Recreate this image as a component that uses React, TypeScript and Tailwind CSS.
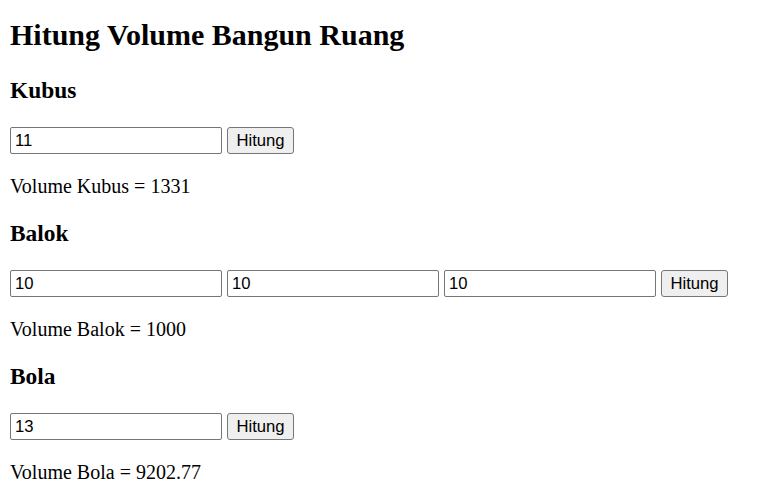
import React, { useState } from "react";

const inputCls =
  "w-[212px] h-[27px] border border-[#767676] rounded-[2px] bg-white pl-[4px] text-[16.67px] text-black font-['Liberation_Sans',Arial,sans-serif] outline-none";
const btnCls =
  "w-[67px] h-[27px] border border-[#767676] rounded-[3px] bg-[#efefef] text-[16.67px] text-black font-['Liberation_Sans',Arial,sans-serif] flex items-center justify-center";

const App = () => {
  const [sisi, setSisi] = useState("11");
  const [p, setP] = useState("10");
  const [l, setL] = useState("10");
  const [t, setT] = useState("10");
  const [r, setR] = useState("13");

  const [kubus, setKubus] = useState("1331");
  const [balok, setBalok] = useState("1000");
  const [bola, setBola] = useState("9202.77");

  return (
    <div className="px-[10px] pt-[18px] text-black font-['Liberation_Serif','Times_New_Roman',serif]">
      <h2 className="text-[30px] leading-[34px] font-bold mb-[25px]">
        Hitung Volume Bangun Ruang
      </h2>

      <h3 className="text-[23.4px] leading-[27px] font-bold mb-[23px]">Kubus</h3>
      <div className="flex items-start gap-[5px] h-[28px]">
        <input className={inputCls} value={sisi} onChange={(e) => setSisi(e.target.value)} />
        <button
          className={btnCls}
          onClick={() => setKubus(String(Number(sisi) ** 3))}
        >
          Hitung
        </button>
      </div>
      <p className="text-[20px] leading-[23px] mt-[20px] mb-[22px]">
        Volume Kubus = {kubus}
      </p>

      <h3 className="text-[23.4px] leading-[27px] font-bold mb-[23px]">Balok</h3>
      <div className="flex items-start gap-[5px] h-[28px]">
        <input className={inputCls} value={p} onChange={(e) => setP(e.target.value)} />
        <input className={inputCls} value={l} onChange={(e) => setL(e.target.value)} />
        <input className={inputCls} value={t} onChange={(e) => setT(e.target.value)} />
        <button
          className={btnCls}
          onClick={() => setBalok(String(Number(p) * Number(l) * Number(t)))}
        >
          Hitung
        </button>
      </div>
      <p className="text-[20px] leading-[23px] mt-[20px] mb-[22px]">
        Volume Balok = {balok}
      </p>

      <h3 className="text-[23.4px] leading-[27px] font-bold mb-[23px]">Bola</h3>
      <div className="flex items-start gap-[5px] h-[28px]">
        <input className={inputCls} value={r} onChange={(e) => setR(e.target.value)} />
        <button
          className={btnCls}
          onClick={() =>
            setBola(((4 / 3) * Math.PI * Number(r) ** 3).toFixed(2))
          }
        >
          Hitung
        </button>
      </div>
      <p className="text-[20px] leading-[23px] mt-[20px] mb-[22px]">
        Volume Bola = {bola}
      </p>
    </div>
  );
};

export default App;
